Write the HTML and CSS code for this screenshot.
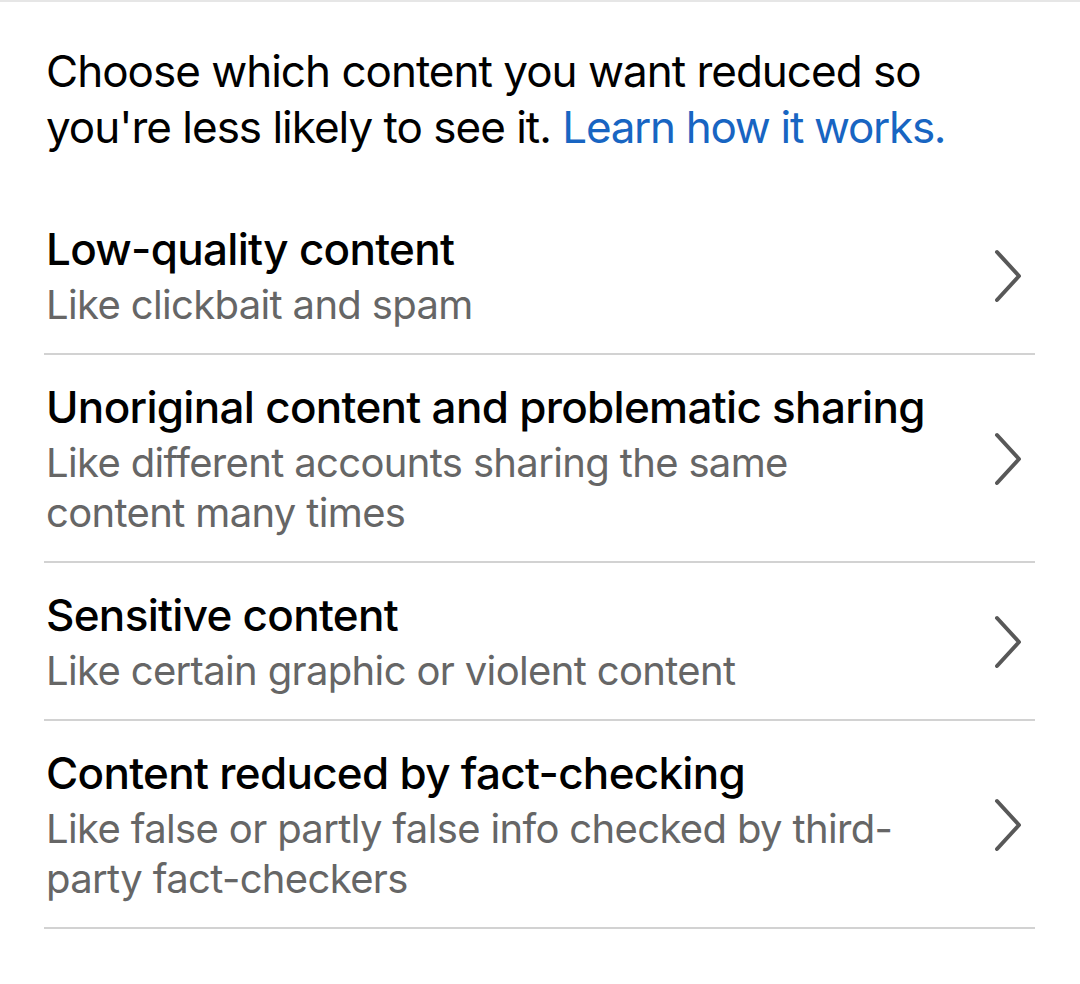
FILE: index.html
```html
<!DOCTYPE html>
<html lang="en">
<head>
<meta charset="utf-8">
<title>Reduce content</title>
<link rel="stylesheet" href="styles.css">
</head>
<body>
<div class="page">
  <p class="intro">Choose which content you want reduced so you're less likely to see it. <a class="link" href="#">Learn how it works.</a></p>
  <ul class="list">
    <li class="item">
      <div class="text">
        <div class="title">Low-quality content</div>
        <div class="sub">Like clickbait and spam</div>
      </div>
      <svg class="chev" viewBox="0 0 28 54" width="28" height="54"><polyline points="3,3 25,27 3,51"/></svg>
    </li>
    <li class="item">
      <div class="text">
        <div class="title">Unoriginal content and problematic sharing</div>
        <div class="sub">Like different accounts sharing the same content many times</div>
      </div>
      <svg class="chev" viewBox="0 0 28 54" width="28" height="54"><polyline points="3,3 25,27 3,51"/></svg>
    </li>
    <li class="item">
      <div class="text">
        <div class="title">Sensitive content</div>
        <div class="sub">Like certain graphic or violent content</div>
      </div>
      <svg class="chev" viewBox="0 0 28 54" width="28" height="54"><polyline points="3,3 25,27 3,51"/></svg>
    </li>
    <li class="item">
      <div class="text">
        <div class="title">Content reduced by fact-checking</div>
        <div class="sub">Like false or partly false info checked by third-party fact-checkers</div>
      </div>
      <svg class="chev" viewBox="0 0 28 54" width="28" height="54"><polyline points="3,3 25,27 3,51"/></svg>
    </li>
  </ul>
</div>
</body>
</html>
```
FILE: styles.css
```css
html, body {
  margin: 0;
  padding: 0;
  background: #ffffff;
}
body {
  font-family: Inter, "Noto Sans", "Liberation Sans", sans-serif;
  color: #000000;
  border-top: 2px solid #e6e6e6;
}
.page {
  padding: 41px 45px 0 44px;
}
.intro {
  margin: 0 60px 42px 2px;
  font-size: 44px;
  line-height: 56px;
  font-weight: 400;
  letter-spacing: -1px;
  color: #000;
}
.link {
  color: #1865c2;
  text-decoration: none;
  letter-spacing: -1.3px;
}
.list {
  list-style: none;
  margin: 0;
  padding: 0;
}
.item {
  display: flex;
  align-items: center;
  padding: 25px 0 23px 2px;
  border-bottom: 2px solid #d2d2d2;
}
.text {
  flex: 1;
  min-width: 0;
  padding-right: 62px;
}
.title {
  font-size: 44px;
  line-height: 54px;
  font-weight: 500;
  letter-spacing: -0.7px;
  color: #000;
}
.sub {
  margin-top: 4px;
  font-size: 40px;
  line-height: 50px;
  font-weight: 400;
  letter-spacing: -0.65px;
  color: #666666;
}
.chev {
  flex: none;
  margin-right: 13px;
  fill: none;
  stroke: #585858;
  stroke-width: 4;
  stroke-linecap: round;
  stroke-linejoin: round;
}
```
